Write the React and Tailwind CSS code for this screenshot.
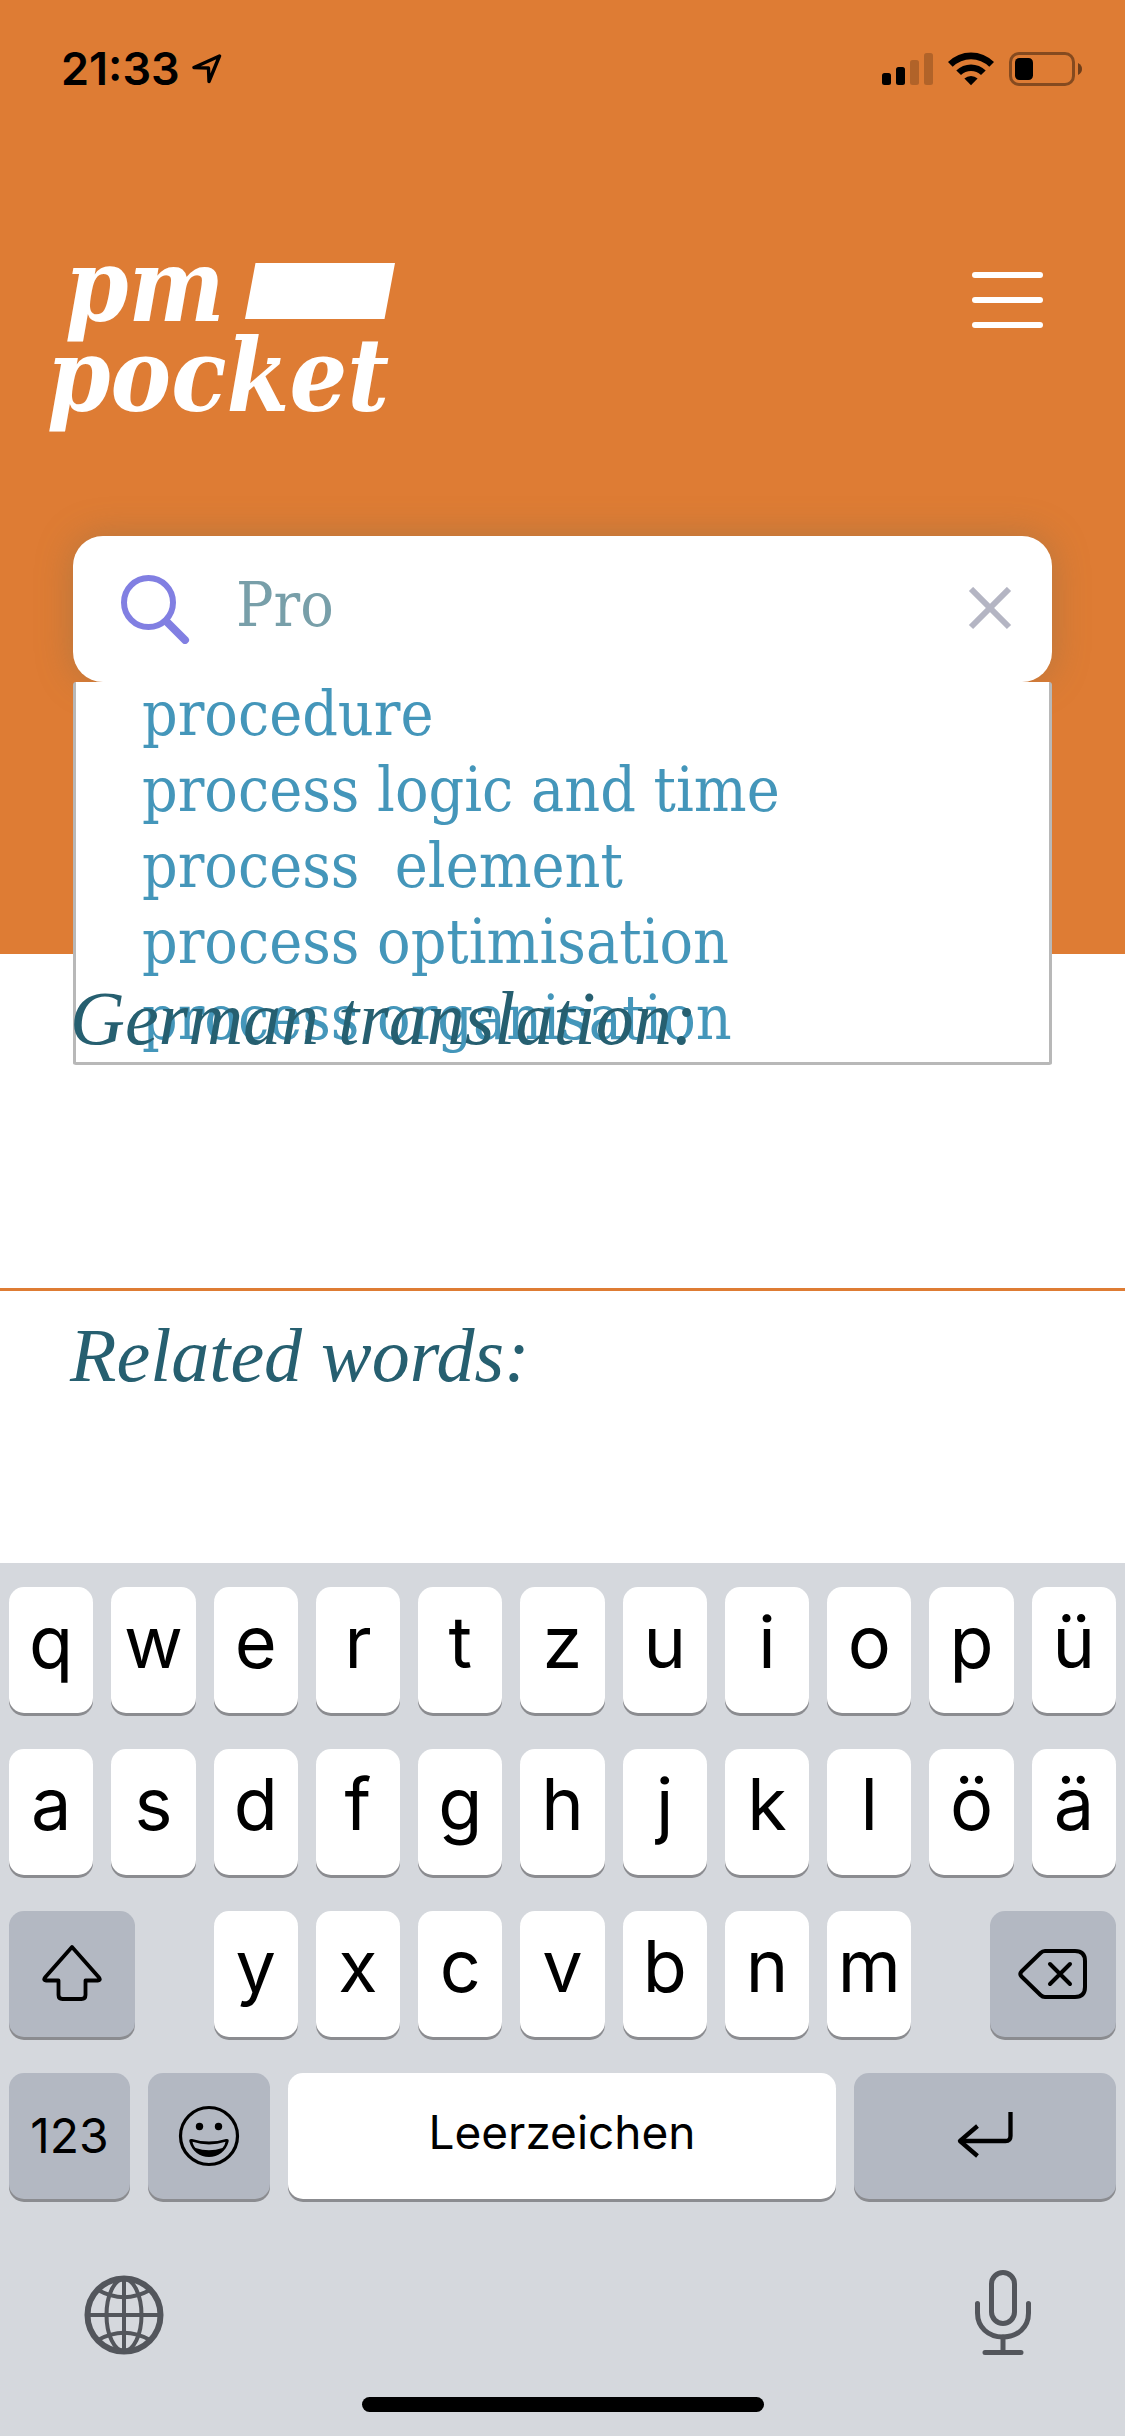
import React, { useState } from "react";

const SLAB = "font-['DejaVu_Serif_Condensed','DejaVu_Serif',serif]";

const SUGGESTIONS = [
  "procedure",
  "process logic and time",
  "process  element",
  "process optimisation",
  "process organisation",
];

function StatusBar() {
  return (
    <div className="flex items-center justify-between pt-[41px] pr-[42px] pl-[61px] font-['Inter',sans-serif]">
      <div className="flex items-center gap-3">
        <span className="text-[45px] leading-[56px] font-semibold">21:33</span>
        <svg width="30" height="30" viewBox="0 0 30 30" fill="none" stroke="#000" strokeWidth="3.4" strokeLinejoin="round" aria-hidden="true">
          <path d="M27.5 2 L2 13.5 L16.5 14 L17 27.5 Z" />
        </svg>
      </div>
      <div className="flex items-center gap-[15px]">
        <svg width="51" height="34" viewBox="0 0 51 34" aria-label="Signal">
          <rect x="0" y="21" width="9" height="12" rx="2.5" />
          <rect x="14" y="15" width="9" height="18" rx="2.5" />
          <rect x="28" y="8" width="9" height="25" rx="2.5" opacity="0.2" />
          <rect x="42" y="1" width="9" height="32" rx="2.5" opacity="0.2" />
        </svg>
        <svg width="46" height="34" viewBox="0 0 46 34" aria-label="Wi-Fi">
          <path d="M0 10 A32.5 32.5 0 0 1 46 10 L41.3 14.8 A26 26 0 0 0 4.7 14.8 Z" />
          <path d="M8.3 18.4 A21 21 0 0 1 37.7 18.4 L33 23.1 A14.3 14.3 0 0 0 13 23.1 Z" />
          <path d="M16.4 26.6 A9.6 9.6 0 0 1 29.6 26.6 L23 33.3 Z" />
        </svg>
        <svg width="74" height="34" viewBox="0 0 74 34" aria-label="Battery">
          <rect x="1.5" y="1.5" width="63" height="31" rx="8.5" fill="none" stroke="#000" strokeWidth="3" opacity="0.4" />
          <rect x="6" y="6" width="18" height="22" rx="4.5" />
          <path d="M69 11 C72 12.5 73 14.8 73 17 C73 19.2 72 21.5 69 23 Z" opacity="0.5" />
        </svg>
      </div>
    </div>
  );
}

function Logo() {
  return (
    <div className={`${SLAB} font-bold italic text-white text-[101px] leading-[90px]`}>
      <div className="flex items-start gap-5 pl-[18px]">
        <span>pm</span>
        <svg className="mt-[22px]" width="150" height="56" viewBox="0 0 150 56" aria-hidden="true">
          <path d="M10.500 0 H150 L139.500 56 H0 Z" fill="#fff" />
        </svg>
      </div>
      <div>pocket</div>
    </div>
  );
}

function Key({ children, dark = false, className = "", label }) {
  return (
    <button
      type="button"
      aria-label={label}
      className={`flex h-[126px] items-center justify-center rounded-[15px] shadow-[0_3px_0_#8b8c90] ${dark ? "bg-[#b3b8c2]" : "bg-white"} ${className}`}
    >
      {children}
    </button>
  );
}

function Letter({ children }) {
  return <Key className="pb-4 text-[72px] leading-[80px]">{children}</Key>;
}

function Keyboard() {
  return (
    <div className="bg-[#d5d8dd] px-[9px] pt-6 pb-6 font-['Inter',sans-serif] text-black">
      <div className="grid grid-cols-11 gap-x-[18px] gap-y-9">
        {[..."qwertzuiopüasdfghjklöä"].map((c) => (
          <Letter key={c}>{c}</Letter>
        ))}
        <Key dark label="Shift" className="col-span-2 w-[126px]">
          <svg width="60" height="60" viewBox="0 0 60 60" fill="none" stroke="#000" strokeWidth="3.8" strokeLinejoin="round" aria-hidden="true">
            <path d="M30 3 L57 33.500 Q59 36.500 56 36.500 H43.500 V51 Q43.500 55 39.500 55 H20.500 Q16.500 55 16.500 51 V36.500 H4 Q1 36.500 3 33.500 Z" />
          </svg>
        </Key>
        {[..."yxcvbnm"].map((c) => (
          <Letter key={c}>{c}</Letter>
        ))}
        <Key dark label="Löschen" className="col-span-2 w-[126px] justify-self-end">
          <svg width="70" height="52" viewBox="0 0 70 52" fill="none" stroke="#000" strokeWidth="4" strokeLinecap="round" strokeLinejoin="round" aria-hidden="true">
            <path d="M27 3 H57 Q67 3 67 13 V39 Q67 49 57 49 H27 Q24.500 49 22.500 47 L3.500 28.500 Q1 26 3.500 23.500 L22.500 5 Q24.500 3 27 3 Z" />
            <path d="M32 16 L52 36 M52 16 L32 36" />
          </svg>
        </Key>
      </div>
      <div className="mt-9 flex gap-[18px]">
        <Key dark className="w-[121px] text-[48px] leading-[56px]">123</Key>
        <Key dark label="Emoji" className="w-[122px]">
          <svg width="62" height="62" viewBox="0 0 62 62" aria-hidden="true">
            <circle cx="31" cy="31" r="28.500" fill="none" stroke="#000" strokeWidth="3.200" />
            <circle cx="21.500" cy="21.500" r="3.700" />
            <circle cx="40.500" cy="21.500" r="3.700" />
            <path fillRule="evenodd" d="M11.500 37 Q10.500 33.500 14 34 Q31 39 48 34 Q51.500 33.500 50.500 37 C48 46 40 52 31 52 C22 52 14 46 11.500 37 Z M14.500 36.800 C15 39.500 16 41.500 17.500 43 Q31 47.500 44.500 43 Q47 40.500 47.500 36.800 Q31 42 14.500 36.800 Z" />
          </svg>
        </Key>
        <Key className="flex-1 pb-2 text-[46px] leading-[56px]">Leerzeichen</Key>
        <Key dark label="Return" className="w-[262px]">
          <svg width="58" height="50" viewBox="0 0 58 50" fill="none" stroke="#000" strokeWidth="4.300" strokeLinejoin="round" aria-hidden="true">
            <path d="M54.500 1 V25 Q54.500 30 49.500 30 H4" />
            <path d="M21.500 15 L4 30 L21.500 45" />
          </svg>
        </Key>
      </div>
      <div className="flex items-center justify-between px-[75px] pt-[70px]">
        <button type="button" aria-label="Sprache">
          <svg width="80" height="88" viewBox="0 -4 80 88" fill="none" stroke="#53565c" aria-hidden="true">
            <circle cx="40" cy="40" r="36.500" strokeWidth="6" />
            <g strokeWidth="4">
              <path d="M40 3 V77 M3 40 H77" />
              <ellipse cx="40" cy="40" rx="17.500" ry="36" />
              <path d="M14 15 Q40 29.500 66 15 M14 65 Q40 50.500 66 65" />
            </g>
          </svg>
        </button>
        <button type="button" aria-label="Diktat" className="mr-2 mb-1">
          <svg width="60" height="88" viewBox="0 0 60 88" fill="none" stroke="#53565c" strokeWidth="5" strokeLinecap="round" aria-hidden="true">
            <rect x="18.500" y="3.500" width="23" height="51" rx="11.500" />
            <path d="M4.500 34.500 V44 C4.500 58 15 68 30 68 C45 68 55.500 58 55.500 44 V34.500" />
            <path d="M30 68 V83 M12 83.500 H48" />
          </svg>
        </button>
      </div>
      <div className="mx-auto mt-9 h-[15px] w-[402px] rounded-full bg-black" />
    </div>
  );
}

export default function App() {
  const [query, setQuery] = useState("Pro");
  return (
    <div className="flex min-h-screen flex-col bg-white">
      <header className="relative h-[954px] bg-[#de7c34]">
        <StatusBar />
        <div className="flex items-start justify-between pt-[144px] pr-[82px] pl-[47px]">
          <Logo />
          <button type="button" aria-label="Menü" className="mt-[31px] flex w-[71px] flex-col gap-[19px]">
            <span className="h-[6px] rounded-full bg-white" />
            <span className="h-[6px] rounded-full bg-white" />
            <span className="h-[6px] rounded-full bg-white" />
          </button>
        </div>
        <div className="absolute inset-x-[73px] top-[536px]">
          <div className="flex h-[146px] items-center rounded-[30px] bg-white pr-10 pl-12 shadow-[0_0_36px_rgba(120,110,80,0.4)]">
            <svg width="69" height="70" viewBox="0 0 69 70" fill="none" stroke="#817fe2" aria-hidden="true">
              <circle cx="27.500" cy="28.500" r="24.500" strokeWidth="6" />
              <path d="M46 48 L64 66" strokeWidth="8" strokeLinecap="round" />
            </svg>
            <input
              aria-label="Suche"
              value={query}
              onChange={(e) => setQuery(e.target.value)}
              className={`${SLAB} ml-[46px] min-w-0 flex-1 bg-transparent pb-2 text-[62px] leading-[76px] text-[#789fa9] outline-none`}
            />
            <button type="button" aria-label="Löschen" onClick={() => setQuery("")}>
              <svg width="44" height="44" viewBox="0 0 44 44" stroke="#b4b5c3" strokeWidth="6" aria-hidden="true">
                <path d="M3 2 L41 40 M41 2 L3 40" />
              </svg>
            </button>
          </div>
          <ul className={`${SLAB} rounded-[3px] border-x-[3px] border-b-[3px] border-[#b8b8b8] bg-white pl-[66px] text-[62px] leading-[64px] text-[#4496ba]`}>
            {SUGGESTIONS.map((s) => (
              <li key={s} className="pb-3 whitespace-pre">{s}</li>
            ))}
          </ul>
        </div>
      </header>
      <main className="flex-1 font-['Liberation_Serif',serif] text-[76px] leading-[96px] text-[#265f70] italic">
        <section className="h-[337px] border-b-[3px] border-[#de7c34] px-[70px] pt-4">
          <h2 className="relative">German translation:</h2>
        </section>
        <section className="px-[70px] pt-4">
          <h2>Related words:</h2>
        </section>
      </main>
      <Keyboard />
    </div>
  );
}
